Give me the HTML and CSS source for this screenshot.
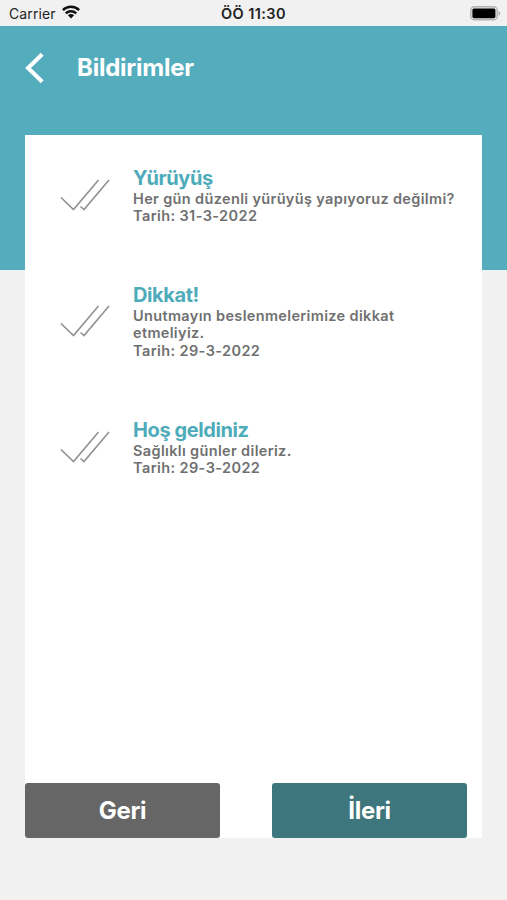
FILE: index.html
```html
<!DOCTYPE html>
<html lang="tr">
<head>
<meta charset="utf-8">
<title>Bildirimler</title>
<link rel="stylesheet" href="styles.css">
</head>
<body>
<div class="statusbar">
  <div class="carrier"><span>Carrier</span>
    <svg width="18" height="14" viewBox="0 0 18 14"><g fill="none" stroke="#111" stroke-width="2.5"><path d="M.9 5.2a11.5 11.5 0 0 1 16.2 0"/><path d="M3.8 8.3a7.4 7.4 0 0 1 10.4 0"/></g><path d="M5.9 10.3a4.4 4.4 0 0 1 6.2 0L9 13.4z" fill="#111"/></svg>
  </div>
  <div class="clock">ÖÖ 11:30</div>
  <div class="battery">
    <svg width="31" height="15" viewBox="0 0 31 15"><rect x=".8" y=".8" width="26.4" height="13" rx="3.6" fill="#e4e4e4" stroke="#b3b3b3" stroke-width="1.4"/><rect x="2.4" y="2.4" width="23" height="9.8" rx="1.6" fill="#000"/><path d="M28.6 5v4.800q1.600-.8 1.600-2.400t-1.600-2.400z" fill="#aaa"/></svg>
  </div>
</div>
<main class="screen">
  <header class="header">
    <svg class="back" width="20" height="32" viewBox="0 0 20 32"><path d="M17.200 2.200 3 16l14.200 13.800" fill="none" stroke="#fff" stroke-width="4"/></svg>
    <h1 class="title">Bildirimler</h1>
  </header>
  <section class="card">
    <ul class="list">
      <li class="item">
        <svg class="check" width="50" height="34" viewBox="0 0 50 34"><path d="M1 19.500 13.500 31.500 38.500 2M20.500 28.500l3.500 3L49 2" fill="none" stroke="#919191" stroke-width="1.600"/></svg>
        <div class="text"><h2>Yürüyüş</h2><p class="message">Her gün düzenli yürüyüş yapıyoruz değilmi?</p><p>Tarih: 31-3-2022</p></div>
      </li>
      <li class="item">
        <svg class="check" width="50" height="34" viewBox="0 0 50 34"><path d="M1 19.500 13.500 31.500 38.500 2M20.500 28.500l3.500 3L49 2" fill="none" stroke="#919191" stroke-width="1.600"/></svg>
        <div class="text"><h2>Dikkat!</h2><p class="message">Unutmayın beslenmelerimize dikkat etmeliyiz.</p><p>Tarih: 29-3-2022</p></div>
      </li>
      <li class="item">
        <svg class="check" width="50" height="34" viewBox="0 0 50 34"><path d="M1 19.500 13.500 31.500 38.500 2M20.500 28.500l3.500 3L49 2" fill="none" stroke="#919191" stroke-width="1.600"/></svg>
        <div class="text"><h2>Hoş geldiniz</h2><p class="message">Sağlıklı günler dileriz.</p><p>Tarih: 29-3-2022</p></div>
      </li>
    </ul>
    <div class="actions">
      <button class="btn prev">Geri</button>
      <button class="btn next">İleri</button>
    </div>
  </section>
</main>
</body>
</html>
```
FILE: styles.css
```css
* { box-sizing: border-box; margin: 0; padding: 0; }
body { height: 900px; background: #f1f1f1; font-family: Inter, "Liberation Sans", sans-serif; overflow: hidden; }
svg { display: block; flex: none; }
.statusbar { height: 25.500px; display: grid; grid-template-columns: 1fr auto 1fr; align-items: center; padding: 2px 6px 0 6px; color: #222; }
.carrier { display: flex; align-items: center; gap: 6px; padding-left: 3px; font-size: 14px; letter-spacing: .1px; }
.carrier svg { margin-top: -3px; }
.clock { font-size: 14.500px; font-weight: 600; letter-spacing: .4px; }
.battery { display: flex; justify-content: flex-end; }
.screen { height: 874.500px; padding: 0 25px; background: linear-gradient(#54adbc 244px, #f1f1f1 244px); }
.header { height: 109.500px; display: flex; align-items: flex-start; padding-top: 27px; }
.back { margin-top: -1px; }
.title { margin: 0 0 0 32px; color: #fff; font-size: 24px; line-height: 30px; font-weight: 700; letter-spacing: -.25px; }
.card { height: 703px; background: #fff; display: flex; flex-direction: column; justify-content: space-between; }
.list { list-style: none; margin-top: -3px; }
.item { height: 126px; display: flex; align-items: center; padding: 0 25px 0 35px; }
.list .item .check { margin-right: 23px; }
.text { flex: 1; color: #707070; }
.text h2 { color: #4eabb9; font-size: 20px; line-height: 24px; font-weight: 650; letter-spacing: -.4px; }
.text p { font-size: 14.500px; line-height: 17.500px; font-weight: 640; letter-spacing: .4px; }
.text .message { letter-spacing: .35px; }
.actions { display: flex; justify-content: space-between; padding-right: 15px; }
.btn { width: 195px; height: 55px; border: 0; border-radius: 3px; color: #fff; font: 650 24px/30px Inter, "Liberation Sans", sans-serif; letter-spacing: -.3px; }
.prev { background: #666; }
.next { background: #3d767c; }
```
